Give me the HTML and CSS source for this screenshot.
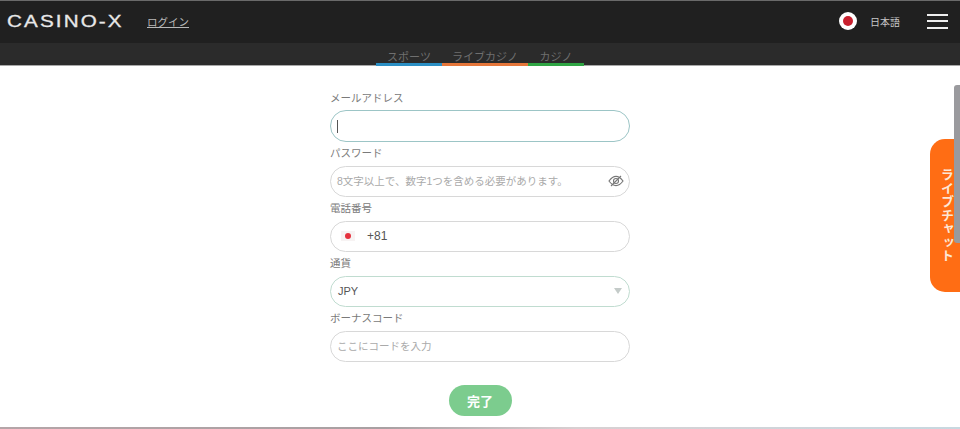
FILE: index.html
```html
<!DOCTYPE html>
<html lang="ja">
<head>
<meta charset="utf-8">
<title>CASINO-X</title>
<link rel="stylesheet" href="styles.css">
</head>
<body>
<div class="page">
  <header class="topbar">
    <div class="brand">
      <span class="logo">CASINO-X</span>
      <a class="login" href="#">ログイン</a>
    </div>
    <div class="tools">
      <span class="lang-flag"><span class="lang-dot"></span></span>
      <span class="lang-name">日本語</span>
      <span class="burger"><i></i><i></i><i></i></span>
    </div>
  </header>
  <nav class="subnav">
    <a class="tab tab-blue" href="#">スポーツ</a>
    <a class="tab tab-orange" href="#">ライブカジノ</a>
    <a class="tab tab-green" href="#">カジノ</a>
  </nav>
  <main class="content">
    <form class="form">
      <div class="field">
        <label class="label">メールアドレス</label>
        <div class="box box-active"><span class="caret"></span></div>
      </div>
      <div class="field">
        <label class="label">パスワード</label>
        <div class="box box-grey">
          <span class="placeholder">8文字以上で、数字1つを含める必要があります。</span>
          <svg class="eye" viewBox="0 0 16 12" width="16" height="12" aria-hidden="true">
            <path d="M1 6C3.5 2.6 5.8 1.4 8 1.4S12.500 2.600 15 6C12.500 9.400 10.200 10.600 8 10.600S3.500 9.400 1 6Z" fill="none" stroke="#777" stroke-width="1.200"/>
            <circle cx="8" cy="6" r="2.500" fill="none" stroke="#777" stroke-width="1.100"/>
            <path d="M3 11L13 1" stroke="#777" stroke-width="1.100"/>
          </svg>
        </div>
      </div>
      <div class="field">
        <label class="label">電話番号</label>
        <div class="box box-grey">
          <span class="flag"><span class="flag-dot"></span></span>
          <span class="value">+81</span>
        </div>
      </div>
      <div class="field">
        <label class="label">通貨</label>
        <div class="box box-green">
          <span class="value value-select">JPY</span>
          <span class="arrow"></span>
        </div>
      </div>
      <div class="field">
        <label class="label">ボーナスコード</label>
        <div class="box box-grey"><span class="placeholder">ここにコードを入力</span></div>
      </div>
      <button class="submit" type="button">完了</button>
    </form>
  </main>
  <div class="footer-line"></div>
  <a class="chat" href="#"><span class="chat-text">ライブチャット</span></a>
  <div class="scroll-thumb"></div>
</div>
</body>
</html>
```
FILE: styles.css
```css
* { box-sizing: border-box; }
html, body { margin: 0; padding: 0; height: 100%; overflow: hidden; background: #fff; }
body { font-family: "Liberation Sans", "Noto Sans CJK JP", sans-serif; }
.page { position: relative; display: flex; flex-direction: column; width: 960px; height: 429px; overflow: hidden; }

.topbar { display: flex; align-items: center; justify-content: space-between; height: 43px; flex: none; background: #202020; border-top: 1px solid #6a6a6a; padding: 0 12px 2px 7px; }
.brand { display: flex; align-items: center; }
.logo { font-family: "Liberation Sans", sans-serif; font-size: 16.500px; color: #e8e8e8; letter-spacing: 1.700px; width: 140px; transform: scaleX(1.25); transform-origin: left center; -webkit-text-stroke: 0.300px #e8e8e8; }
.login { font-size: 10.500px; color: #b8b8b8; text-decoration: underline; }
.tools { display: flex; align-items: center; }
.lang-flag { display: flex; align-items: center; justify-content: center; width: 18px; height: 18px; border-radius: 50%; background: #fff; margin-right: 13px; }
.lang-dot { width: 10px; height: 10px; border-radius: 50%; background: #c8202e; }
.lang-name { font-size: 10px; color: #c8c8c8; margin-right: 27px; }
.burger { display: flex; flex-direction: column; justify-content: space-between; width: 21px; height: 15px; }
.burger i { display: block; height: 2px; background: #eee; }

.subnav { display: flex; justify-content: center; height: 23px; flex: none; background: #2b2b2b; border-bottom: 1px solid #a8a8a8; }
.tab { display: flex; align-items: flex-end; justify-content: center; height: 23px; font-size: 11px; line-height: 11px; color: #6f6f6f; text-decoration: none; border-bottom: 3px solid; }
.tab-blue { width: 66px; border-color: #2b8fc4; }
.tab-orange { width: 86px; border-color: #e5763a; }
.tab-green { width: 56px; border-color: #2fa544; }

.content { flex: 1; display: flex; justify-content: center; min-height: 0; }
.form { display: flex; flex-direction: column; align-items: center; width: 300px; padding-top: 24px; }
.field { display: flex; flex-direction: column; width: 300px; height: 55px; }
.label { flex: none; font-size: 10.500px; line-height: 16px; height: 21px; color: #7a7a7a; }
.box { display: flex; align-items: center; flex: none; height: 31px; border-radius: 16px; border: 1px solid #d6d6d6; padding: 0 6px 2px; background: #fff; }
.box-active { height: 32px; margin-top: -1px; border: 1.500px solid #9cc5c6; padding-bottom: 0; }
.box-grey { border-color: #d8d8d8; }
.box-green { border-color: #c0dcd0; }
.caret { width: 1px; height: 13px; background: #555; }
.placeholder { font-size: 10.500px; color: #aaa; white-space: nowrap; }
.eye { margin-left: auto; margin-right: -1px; }
.flag { display: flex; align-items: center; justify-content: center; width: 14px; height: 10px; margin-left: 4px; background: #f7f3f3; }
.flag-dot { width: 6px; height: 6px; border-radius: 50%; background: #e5323e; }
.value { font-size: 12px; color: #555; margin-left: 12px; }
.value-select { font-size: 11px; margin-left: 1px; }
.arrow { margin-left: auto; margin-right: 1px; width: 0; height: 0; border-left: 4px solid transparent; border-right: 4px solid transparent; border-top: 6px solid #c4cbc9; }
.submit { width: 63px; height: 31px; margin-top: 20px; border: 0; border-radius: 16px; background: #7ccc8e; color: #fff; font-family: inherit; font-size: 13px; font-weight: 700; padding: 0; }

.footer-line { height: 2px; flex: none; background: linear-gradient(90deg, #b5a5a8 0%, #a8a0a2 40%, #d8d0d2 60%, #c8d8e0 100%); }

.chat { position: absolute; right: 0; top: 139px; display: flex; align-items: center; justify-content: center; width: 30px; height: 153px; background: #ff6d14; border-radius: 15px 0 0 15px; text-decoration: none; }
.chat-text { writing-mode: vertical-rl; font-size: 13px; font-weight: 700; color: #fde6d4; letter-spacing: 0.500px; margin-left: 3px; }
.scroll-thumb { position: absolute; right: 0; top: 85px; width: 6px; height: 158px; background: #9a9a9e; border-radius: 3px 0 0 3px; }
```
